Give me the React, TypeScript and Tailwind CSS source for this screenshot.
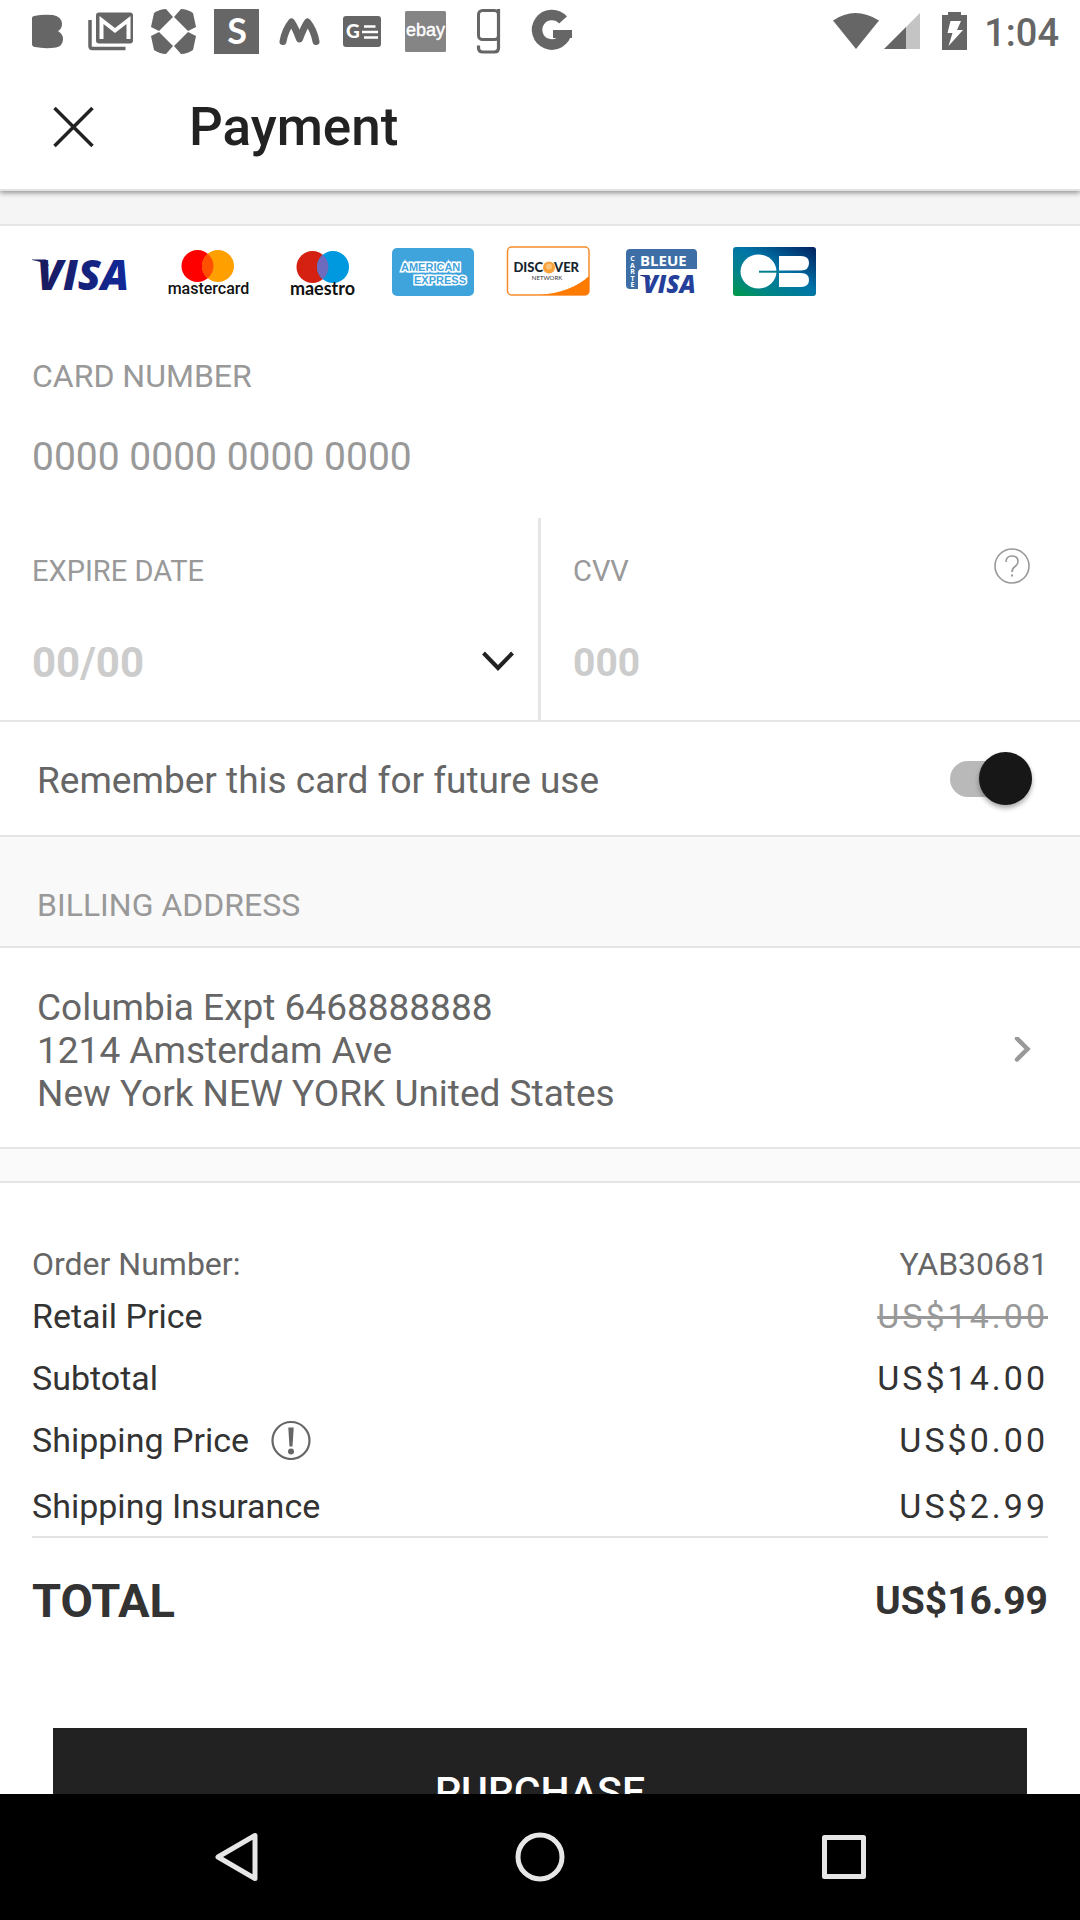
import type { ReactNode } from "react";

const GRAY = "#666666";

function Glyph({ children }: { children: ReactNode }) {
  return (
    <svg className="size-[46px] shrink-0" viewBox="0 0 46 46" aria-hidden="true">
      {children}
    </svg>
  );
}

function StatusBar() {
  const petal = "M0 18 L3 4 Q9 0 15 0 L22 8 L8 22 Z";
  return (
    <div className="flex items-start justify-between pt-[9px] pr-[21px] pl-[25px]">
      <div className="flex gap-[17px]">
        <Glyph>
          <path
            fill={GRAY}
            d="M9 7 Q18 5 28 6 Q37 8 37 15 Q37 20 33 22 Q38 25 38 30 Q38 37 31 38.500 Q20 40 10 38 Q7 37.500 7 35 V9 Q7 7.400 9 7 Z"
          />
        </Glyph>
        <Glyph>
          <path d="M2 11 V37 Q2 39.500 4.500 39.500 H37.500" fill="none" stroke={GRAY} strokeWidth="3.500" />
          <rect x="8" y="3.500" width="37" height="31" rx="3" fill={GRAY} />
          <path d="M13.500 30 V11 L27 21.500 L40.500 11 V30" fill="none" stroke="#fff" strokeWidth="4" />
        </Glyph>
        <Glyph>
          <g fill={GRAY}>
            <path d={petal} />
            <path d={petal} transform="matrix(-1 0 0 1 45 0)" />
            <path d={petal} transform="matrix(1 0 0 -1 0 45)" />
            <path d={petal} transform="matrix(-1 0 0 -1 45 45)" />
          </g>
        </Glyph>
        <Glyph>
          <rect width="45" height="45" fill={GRAY} />
          <text x="23" y="35" textAnchor="middle" fontFamily="Lato, sans-serif" fontWeight="700" fontSize="36" fill="#fff">
            S
          </text>
        </Glyph>
        <Glyph>
          <path
            d="M6 32.500 Q8 21 14.500 13 Q18 18 22.500 30 Q27 18 30.500 13 Q37 21 39 32.500"
            fill="none"
            stroke={GRAY}
            strokeWidth="7"
            strokeLinecap="round"
            strokeLinejoin="round"
          />
        </Glyph>
        <Glyph>
          <rect x="3" y="7" width="38" height="31" rx="3" fill={GRAY} />
          <text x="6" y="29" fontFamily="Lato, sans-serif" fontWeight="900" fontSize="19" fill="#fff">
            G
          </text>
          <path d="M24 17.500H35.500M22 23H38M24 28.500H38" stroke="#fff" strokeWidth="2.600" />
        </Glyph>
        <Glyph>
          <rect x="2" y="2" width="41" height="41" rx="1.500" fill="#858585" />
          <text
            x="22.500"
            y="27"
            textAnchor="middle"
            fontFamily="Liberation Sans, sans-serif"
            fontSize="18"
            fill="#fff"
            stroke="#fff"
            strokeWidth="0.400"
          >
            ebay
          </text>
        </Glyph>
        <Glyph>
          <rect x="12.500" y="1.500" width="20" height="29" rx="4" fill="none" stroke={GRAY} strokeWidth="3" />
          <path d="M32.500 0 V39 Q32.500 43 28.500 43 H17 Q12.500 43 12.500 39 V36.500" fill="none" stroke={GRAY} strokeWidth="3.200" />
        </Glyph>
        <Glyph>
          <path d="M34 11 A14.800 14.800 0 1 0 37.500 23" fill="none" stroke={GRAY} strokeWidth="10.500" />
          <rect x="24" y="21" width="19" height="8" fill={GRAY} />
        </Glyph>
      </div>
      <div className="flex items-start">
        <svg className="h-[46px] w-[138px]" viewBox="0 0 138 46" aria-hidden="true">
          <path fill={GRAY} d="M1 11.500 Q23 -3.500 47 11.500 L24 40 Z" />
          <path fill={GRAY} d="M52 40 L74 18 V40 Z" />
          <path fill="#c4c4c4" d="M74 18 L88 4 V40 H74 Z" />
          <path fill={GRAY} d="M116 3 H129 V6 H135 V41 H110 V6 H116 Z" />
          <path fill="#fff" d="M118.500 12 H129 L125 21 H131 L116.500 37 L120.500 24 H115.500 Z" />
        </svg>
        <span className="mt-[6px] ml-[14px] text-[38px] leading-[36px] font-medium text-[#666666]">1:04</span>
      </div>
    </div>
  );
}

function CardLogos() {
  return (
    <div className="flex gap-[30px]">
      <svg className="h-[50px] w-[102px] overflow-visible" viewBox="0 0 102 50" role="img" aria-label="Visa">
        <defs>
          <linearGradient id="visa" x1="0" x2="1">
            <stop offset="0" stopColor="#1a1a5c" />
            <stop offset="1" stopColor="#10299a" />
          </linearGradient>
        </defs>
        <path d="M0 13.500 H14 L17 20 Q10 15.500 0 14 Z" fill="#1a1a5c" />
        <text x="5" y="44" fontFamily="Open Sans, sans-serif" fontStyle="italic" fontWeight="800" fontSize="42" fill="url(#visa)">
          VISA
        </text>
      </svg>
      <svg className="h-[50px] w-[84px] overflow-visible" viewBox="0 0 84 50" role="img" aria-label="Mastercard">
        <circle cx="33.500" cy="20" r="16" fill="#ff0000" />
        <circle cx="54" cy="20" r="16" fill="#ff9f00" />
        <path d="M43.700 7.700 A16 16 0 0 1 43.700 32.300 A16 16 0 0 1 43.700 7.700 Z" fill="#ff5000" />
        <text x="44.500" y="48" textAnchor="middle" fontFamily="Roboto, sans-serif" fontWeight="500" fontSize="16" fill="#111">
          mastercard
        </text>
      </svg>
      <svg className="h-[50px] w-[84px] overflow-visible" viewBox="0 0 84 50" role="img" aria-label="Maestro">
        <circle cx="34.500" cy="21" r="16" fill="#d42112" />
        <circle cx="55" cy="21" r="16" fill="#0099df" />
        <path d="M44.700 8.700 A16 16 0 0 1 44.700 33.300 A16 16 0 0 1 44.700 8.700 Z" fill="#6c6bbd" />
        <text x="44.500" y="49" textAnchor="middle" fontFamily="Lato, sans-serif" fontWeight="700" fontSize="18" fill="#111">
          maestro
        </text>
      </svg>
      <svg className="h-[50px] w-[84px] overflow-visible" viewBox="0 0 84 50" role="img" aria-label="American Express">
        <rect x="0" y="2" width="82" height="48" rx="5" fill="#3fa3dc" />
        <g fontFamily="Liberation Sans, sans-serif" fontWeight="700" fontSize="11" fill="#3fa3dc" stroke="#fff" strokeWidth="3" paintOrder="stroke">
          <text x="9" y="25">AMERICAN</text>
          <text x="22" y="38">EXPRESS</text>
        </g>
      </svg>
      <svg className="h-[50px] w-[84px] overflow-visible" viewBox="0 0 84 50" role="img" aria-label="Discover">
        <rect x="1.500" y="1" width="81.500" height="48" rx="4" fill="#fff" stroke="#f98b2b" strokeWidth="1.500" />
        <path d="M34 49 Q66 46 83 30 V45 Q83 49 79 49 Z" fill="#ff7a00" />
        <circle cx="43" cy="21.500" r="6" fill="#f9a23b" />
        <circle cx="43" cy="20.500" r="3" fill="#fcc27a" />
        <g fontFamily="Lato, sans-serif" fontWeight="900" fontSize="13" fill="#16252e">
          <text x="37" y="26" textAnchor="end">DISC</text>
          <text x="48" y="26">VER</text>
        </g>
        <text x="41" y="34" textAnchor="middle" fontFamily="Lato, sans-serif" fontSize="6" fill="#333">
          NETWORK
        </text>
      </svg>
      <svg className="h-[50px] w-[84px] overflow-visible" viewBox="0 0 84 50" role="img" aria-label="Carte Bleue Visa">
        <path d="M10 3 H73 Q77 3 77 7 V23 H22 Q18 23 18 27 V43 H10 Q6 43 6 39 V7 Q6 3 10 3 Z" fill="#3d6ea5" />
        <text x="20" y="20" fontFamily="Open Sans, sans-serif" fontWeight="700" fontSize="15" fill="#fff">
          BLEUE
        </text>
        <g fontFamily="Open Sans, sans-serif" fontWeight="700" fontSize="7" fill="#fff" textAnchor="middle">
          <text x="12.500" y="15">C</text>
          <text x="12.500" y="21.500">A</text>
          <text x="12.500" y="28">R</text>
          <text x="12.500" y="34.500">T</text>
          <text x="12.500" y="41">E</text>
        </g>
        <path d="M20 29 H29 L31 34 Q26 30.500 20 29.500 Z" fill="#27276b" />
        <text x="23" y="47" fontFamily="Open Sans, sans-serif" fontStyle="italic" fontWeight="800" fontSize="24" fill="#24409a">
          VISA
        </text>
      </svg>
      <svg className="h-[50px] w-[84px] overflow-visible" viewBox="0 0 84 50" role="img" aria-label="CB">
        <defs>
          <linearGradient id="cb" x1="0" y1="1" x2="1" y2="0">
            <stop offset="0" stopColor="#009a45" />
            <stop offset="0.250" stopColor="#008487" />
            <stop offset="0.550" stopColor="#0074a8" />
            <stop offset="1" stopColor="#02205e" />
          </linearGradient>
        </defs>
        <rect x="-1" y="1" width="83" height="49" rx="3" fill="url(#cb)" />
        <ellipse cx="24.500" cy="25.500" rx="18" ry="17" fill="#fff" />
        <path d="M45 10 H67 Q75 10 75 17 Q75 24.500 67 24.500 H45 Z M45 27 H67 Q75 27 75 34 Q75 41 67 41 H45 Z" fill="#fff" />
        <path d="M25 25.700 H45" stroke="#007f90" strokeWidth="2" />
      </svg>
    </div>
  );
}

function Row({
  label,
  value,
  className,
  valueClass,
  children,
}: {
  label: string;
  value: string;
  className: string;
  valueClass: string;
  children?: ReactNode;
}) {
  return (
    <div className={"flex items-center justify-between leading-10 " + className}>
      <dt className="flex items-center gap-[22px]">
        {label}
        {children}
      </dt>
      <dd className={valueClass}>{value}</dd>
    </div>
  );
}

export default function App() {
  return (
    <div className="flex h-screen flex-col bg-white font-[Roboto,sans-serif] text-[#333333]">
      <header className="relative z-10 border-b-2 border-[#e2e2e2] bg-white shadow-[0_2px_5px_rgba(0,0,0,0.4)]">
        <StatusBar />
        <div className="mt-[41px] flex items-center pb-[30px] pl-[49px]">
          <button type="button" aria-label="Close" className="size-[49px]">
            <svg viewBox="0 0 49 49" aria-hidden="true">
              <path d="M5.500 5 L43.500 43 M43.500 5 L5.500 43" stroke="#222" strokeWidth="3.500" />
            </svg>
          </button>
          <h1 className="ml-[91px] text-[53px] leading-[63px] font-medium text-[#222222]">Payment</h1>
        </div>
      </header>

      <main className="min-h-0 flex-1 overflow-y-auto [scrollbar-width:none]">
        <div className="h-[35px] border-b-2 border-[#e5e5e5] bg-[#f5f5f5]" />

        <form>
          <div className="px-8 pt-5">
            <CardLogos />
            <label htmlFor="card" className="mt-[60px] block text-[32px] leading-10 text-[#999999]">
              CARD NUMBER
            </label>
            <input
              id="card"
              inputMode="numeric"
              placeholder="0000 0000 0000 0000"
              className="mt-[37px] block h-12 w-full text-[39px] outline-none placeholder:text-[#999999]"
            />
          </div>

          <div className="mt-[37px] grid grid-cols-[541fr_539fr] border-b-2 border-[#e5e5e5]">
            <div className="border-r-[3px] border-[#e5e5e5] pt-[33px] pr-6 pb-[31px] pl-8">
              <label htmlFor="expire" className="block text-[29px] leading-10 text-[#999999]">
                EXPIRE DATE
              </label>
              <div className="relative mt-[46px]">
                <select
                  id="expire"
                  className="block h-[52px] w-full appearance-none bg-transparent text-[42px] leading-[52px] font-bold text-[#cccccc] outline-none"
                >
                  <option>00/00</option>
                </select>
                <svg
                  className="pointer-events-none absolute top-3 right-0 h-6 w-8"
                  viewBox="0 0 32 24"
                  fill="none"
                  stroke="#222"
                  strokeWidth="4"
                  aria-hidden="true"
                >
                  <path d="M1.500 4 L16 19 L30.500 4" />
                </svg>
              </div>
            </div>
            <div className="pt-[33px] pr-[50px] pb-[31px] pl-8">
              <div className="flex items-start justify-between">
                <label htmlFor="cvv" className="text-[29px] leading-10 text-[#999999]">
                  CVV
                </label>
                <button type="button" aria-label="About the CVV" className="-mt-[3px] size-9">
                  <svg viewBox="0 0 36 36" fill="none" stroke="#999" strokeWidth="1.600" aria-hidden="true">
                    <circle cx="18" cy="18" r="17" />
                    <path d="M12 14 Q12 8 18 8 Q24 8 24 13.500 Q24 16.500 21 18.500 Q18 20.500 18 24" />
                    <path d="M18 26.500 V28.500" strokeWidth="2" />
                  </svg>
                </button>
              </div>
              <input
                id="cvv"
                inputMode="numeric"
                placeholder="000"
                className="mt-[46px] block h-[52px] w-full text-[39px] font-bold outline-none placeholder:text-[#cccccc]"
              />
            </div>
          </div>

          <div className="flex items-start justify-between border-b-2 border-[#e5e5e5] pt-[30px] pr-12 pb-[30px] pl-[37px]">
            <label htmlFor="remember" className="pt-[7px] text-[37px] leading-[44px] text-[#666666]">
              Remember this card for future use
            </label>
            <span className="relative flex h-[53px] w-[82px] items-center">
              <input
                id="remember"
                type="checkbox"
                role="switch"
                defaultChecked
                className="peer absolute inset-0 z-10 size-full cursor-pointer opacity-0"
              />
              <span
                aria-hidden="true"
                className="flex h-9 w-full items-center rounded-full bg-[#b9b9b9] peer-checked:justify-end"
              >
                <span className="size-[53px] rounded-full bg-[#171717] shadow-[0_3px_5px_rgba(0,0,0,0.35)]" />
              </span>
            </span>
          </div>
        </form>

        <section>
          <h2 className="border-b-2 border-[#e5e5e5] bg-[#f9f9f9] pt-12 pb-[21px] pl-[37px] text-[32px] leading-10 text-[#999999]">
            BILLING ADDRESS
          </h2>
          <button
            type="button"
            className="flex w-full items-center justify-between border-b-2 border-[#e5e5e5] pt-[38px] pr-12 pb-8 pl-[37px] text-left text-[37px] leading-[43px] text-[#666666]"
          >
            <span>
              Columbia Expt 6468888888
              <br />
              1214 Amsterdam Ave
              <br />
              New York NEW YORK United States
            </span>
            <svg
              className="h-7 w-[18px]"
              viewBox="0 0 18 28"
              fill="none"
              stroke="#999"
              strokeWidth="4.500"
              strokeLinecap="round"
              aria-hidden="true"
            >
              <path d="M3 1.500 L13.500 12 L3 22.500" />
            </svg>
          </button>
        </section>

        <div className="h-[34px] border-b-2 border-[#e5e5e5] bg-[#fafafa]" />

        <section className="pt-[61px]">
          <dl className="px-8 text-[34px]">
            <Row label="Order Number:" value="YAB30681" className="text-[32px] text-[#666666]" valueClass="" />
            <Row label="Retail Price" value="US$14.00" className="mt-3" valueClass="tracking-[3px] text-[#999999] line-through" />
            <Row label="Subtotal" value="US$14.00" className="mt-[22px]" valueClass="tracking-[3px]" />
            <Row label="Shipping Price" value="US$0.00" className="mt-[22px]" valueClass="tracking-[3px]">
              <button type="button" aria-label="About shipping price" className="size-10">
                <svg viewBox="0 0 40 40" aria-hidden="true">
                  <circle cx="20" cy="20.500" r="18.500" fill="none" stroke="#666" strokeWidth="2.200" />
                  <path d="M17.300 7.500 H22.700 L21.500 26.500 H18.500 Z" fill="#666" />
                  <circle cx="20" cy="31.500" r="3" fill="#666" />
                </svg>
              </button>
            </Row>
            <Row
              label="Shipping Insurance"
              value="US$2.99"
              className="mt-[26px] border-b-2 border-[#e2e2e2] pb-[10px]"
              valueClass="tracking-[3px]"
            />
            <div className="mt-[35px] flex items-center justify-between leading-[56px] font-bold">
              <dt className="text-[47px]">TOTAL</dt>
              <dd className="text-[39px]">US$16.99</dd>
            </div>
          </dl>
          <div className="px-[53px] pt-[99px]">
            <button type="button" className="h-[130px] w-full bg-[#222222] text-[41px] font-medium text-white">
              PURCHASE
            </button>
          </div>
        </section>
      </main>

      <nav className="flex h-[126px] shrink-0 items-center justify-center gap-[255px] bg-black">
        <button type="button" aria-label="Back" className="size-[50px]">
          <svg viewBox="0 0 50 50" fill="none" stroke="#e6e6e6" strokeWidth="5" strokeLinejoin="round" aria-hidden="true">
            <path d="M45 3.500 V46.500 L8 25 Z" />
          </svg>
        </button>
        <button type="button" aria-label="Home" className="size-[50px]">
          <svg viewBox="0 0 50 50" fill="none" stroke="#e6e6e6" strokeWidth="5" aria-hidden="true">
            <circle cx="25" cy="25" r="22" />
          </svg>
        </button>
        <button type="button" aria-label="Recent apps" className="size-[50px]">
          <svg viewBox="0 0 50 50" fill="none" stroke="#e6e6e6" strokeWidth="5" strokeLinejoin="round" aria-hidden="true">
            <rect x="4.500" y="5.500" width="39" height="39" />
          </svg>
        </button>
      </nav>
    </div>
  );
}
